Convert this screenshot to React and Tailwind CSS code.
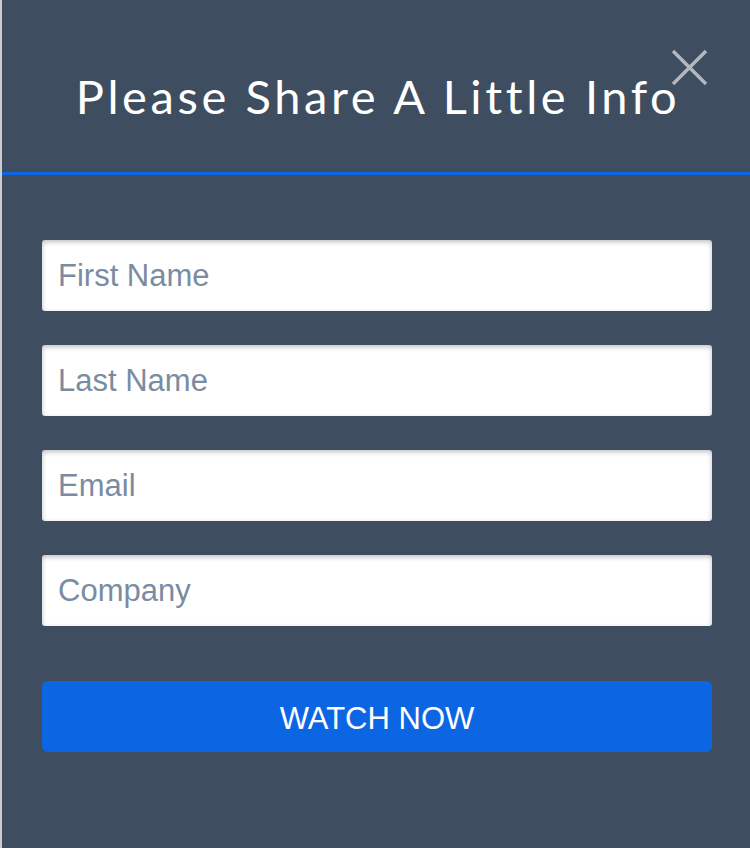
import React from 'react';

const fields = ['First Name', 'Last Name', 'Email', 'Company'];

export default function App() {
  return (
    <div className="flex h-[848px] w-[750px] overflow-hidden">
      <div className="w-[2px] bg-[#c9ccd0]" />
      <div className="relative flex-1 bg-[#3e4e60]">
        {/* header */}
        <div className="flex h-[172px] items-start justify-center pt-[66px]">
          <h1
            className="pl-[4px] text-[47px] leading-[60px] tracking-[3.6px] text-white"
            style={{ fontFamily: 'Lato, "Open Sans", sans-serif' }}
          >
            Please Share A Little Info
          </h1>
        </div>
        <div className="h-[3px] bg-[#0d66e4]" />
        <button className="absolute left-[668px] top-[48px] h-[38px] w-[38px]" aria-label="Close">
          <svg viewBox="0 0 38 38" className="h-full w-full">
            <path d="M3 3 L36 36 M36 3 L3 36" stroke="#b3b8bf" strokeWidth="3.5" fill="none" />
          </svg>
        </button>

        {/* form */}
        <form
          className="flex flex-col gap-[34px] pl-[40px] pr-[38px] pt-[65px]"
          style={{ fontFamily: '"Liberation Sans", Arial, sans-serif' }}
        >
          {fields.map((f) => (
            <input
              key={f}
              placeholder={f}
              className="h-[71px] w-full rounded-[3px] bg-white px-4 text-[31px] text-[#333] shadow-[inset_0_2px_5px_rgba(0,0,0,0.25)] outline-none placeholder:text-[#7a8ca1]"
            />
          ))}
          <button
            type="button"
            className="mt-[21px] h-[71px] w-full rounded-[6px] bg-[#0c66e4] pt-[6px] text-[31px] text-white"
          >
            WATCH NOW
          </button>
        </form>
      </div>
    </div>
  );
}
